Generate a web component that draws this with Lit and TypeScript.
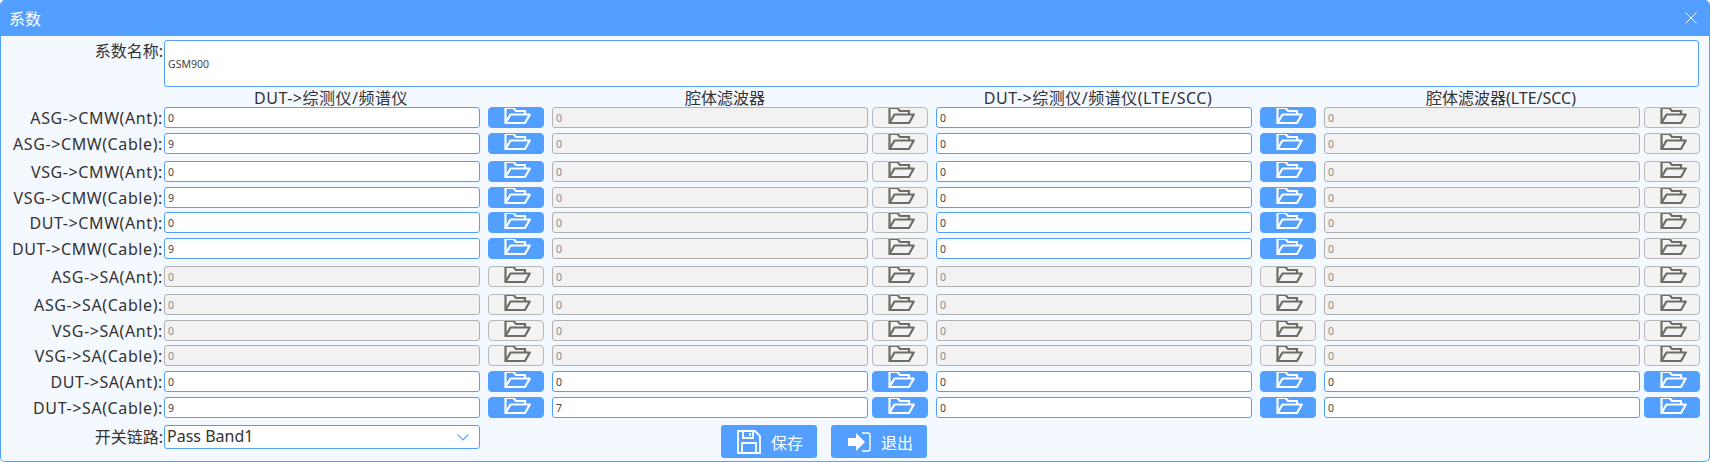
import { LitElement, html, css, svg } from "lit";
import { customElement } from "lit/decorators.js";

const rows: { label: string; cells: { value: string; enabled: boolean }[] }[] = [
  ["ASG->CMW(Ant):", "0", 1, "0", 0, "0", 1, "0", 0],
  ["ASG->CMW(Cable):", "9", 1, "0", 0, "0", 1, "0", 0],
  ["VSG->CMW(Ant):", "0", 1, "0", 0, "0", 1, "0", 0],
  ["VSG->CMW(Cable):", "9", 1, "0", 0, "0", 1, "0", 0],
  ["DUT->CMW(Ant):", "0", 1, "0", 0, "0", 1, "0", 0],
  ["DUT->CMW(Cable):", "9", 1, "0", 0, "0", 1, "0", 0],
  ["ASG->SA(Ant):", "0", 0, "0", 0, "0", 0, "0", 0],
  ["ASG->SA(Cable):", "0", 0, "0", 0, "0", 0, "0", 0],
  ["VSG->SA(Ant):", "0", 0, "0", 0, "0", 0, "0", 0],
  ["VSG->SA(Cable):", "0", 0, "0", 0, "0", 0, "0", 0],
  ["DUT->SA(Ant):", "0", 1, "0", 1, "0", 1, "0", 1],
  ["DUT->SA(Cable):", "9", 1, "7", 1, "0", 1, "0", 1],
].map((r: any[]) => ({
  label: r[0],
  cells: [0, 1, 2, 3].map((i) => ({ value: r[1 + i * 2], enabled: !!r[2 + i * 2] })),
}));

const folder = svg`<path d="M1.5 16V1h8l2.5 3h9v3.5" fill="none" stroke="currentColor" stroke-width="2.2" stroke-linejoin="miter"/><path d="M1.5 16L6.5 7.5H25.8L21 16Z" fill="none" stroke="currentColor" stroke-width="2.2" stroke-linejoin="round"/>`;

@customElement("app-root")
export class AppRoot extends LitElement {
  static styles = css`
    :host {
      display: block;
      width: 1710px;
      height: 462px;
      font-family: "Noto Sans", "Noto Sans CJK SC", sans-serif;
      color: #333;
      background: #fff;
    }
    .window {
      box-sizing: border-box;
      height: 462px;
      display: flex;
      flex-direction: column;
      border-radius: 5px;
      overflow: hidden;
      background: #f4f8ff;
      border: 1px solid #529fff;
      border-top: 0;
    }
    .title {
      height: 36px;
      flex: none;
      margin: 0 -1px;
      background: #529fff;
      color: #fff;
      display: flex;
      align-items: center;
      justify-content: space-between;
      padding: 0 13px 0 9px;
      font-size: 16px;
    }
    .close {
      display: block;
    }
    .grid {
      display: grid;
      padding-top: 4px;
      grid-template-columns: 163px 316px 64px 324px 60px 324px 64px 324px 60px;
      grid-template-rows: 47px 20px 26px 28px 26px 25px 26px 28px 28px 26px 25px 26px 26px 28px auto;
    }
    .label {
      text-align: right;
      font-size: 16px;
      line-height: 23px;
      white-space: nowrap;
      padding-right: 1px;
    }
    .sp {
      letter-spacing: 0.6px;
    }
    .name-label {
      line-height: 22px;
    }
    .select-label {
      line-height: 24px;
    }
    .head {
      font-size: 16px;
      line-height: 22px;
      text-align: center;
      white-space: nowrap;
      justify-self: end;
      width: 316px;
      box-sizing: border-box;
    }
    .h0 { padding-left: 18px; letter-spacing: 0.5px; }
    .h1 { padding-left: 30px; }
    .h2 { padding-left: 8px; letter-spacing: 0.5px; }
    .h3 { padding-left: 38px; }
    input {
      box-sizing: border-box;
      width: 316px;
      height: 21px;
      justify-self: end;
      border: 1px solid #529fff;
      border-radius: 3px;
      background: #fff;
      padding: 0 0 0 3px;
      margin: 0;
      font: 10.5px "Noto Sans", sans-serif;
      color: #444;
      outline: none;
    }
    input:disabled {
      border-color: #b0b0b0;
      background: #f2f2f2;
      color: #8a8a8a;
    }
    .name {
      grid-column: 2 / -1;
      width: 1535px;
      height: 47px;
      justify-self: start;
      padding-left: 3px;
    }
    .fbtn {
      box-sizing: border-box;
      width: 56px;
      height: 21px;
      justify-self: end;
      display: flex;
      justify-content: center;
      padding: 0 0 0 3px;
      margin: 0;
      border: 1px solid #529fff;
      border-radius: 4px;
      background: #529fff;
      color: #fff;
      overflow: hidden;
    }
    .fbtn.off {
      background: #f3f3f3;
      border-color: #b8b8b8;
      color: #6d6d65;
    }
    .fbtn svg {
      display: block;
      width: 27px;
      height: 17px;
      margin-top: -1px;
      flex: none;
    }
    .select {
      box-sizing: border-box;
      width: 316px;
      height: 24px;
      display: flex;
      align-items: center;
      justify-content: space-between;
      border: 1px solid #529fff;
      border-radius: 3px;
      background: #fff;
      padding: 0 10px 2px 2px;
      font-size: 16px;
    }
    .select svg { display: block; margin-top: 2px; }
    .actions {
      grid-column: 3 / -1;
      display: flex;
      gap: 14px;
      padding-left: 241px;
      align-items: flex-start;
    }
    .act {
      box-sizing: border-box;
      width: 96px;
      height: 33px;
      border: 0;
      border-radius: 3px;
      background: #529fff;
      color: #fff;
      display: flex;
      align-items: center;
      gap: 10px;
      padding: 0 0 0 16px;
      margin: 0;
      font: 16px "Noto Sans", "Noto Sans CJK SC", sans-serif;
    }
    .act svg { display: block; flex: none; }
  `;

  render() {
    const heads = ["DUT->综测仪/频谱仪", "腔体滤波器", "DUT->综测仪/频谱仪(LTE/SCC)", "腔体滤波器(LTE/SCC)"];
    return html`
      <div class="window">
        <div class="title">
          <span>系数</span>
          <svg class="close" width="12" height="12" viewBox="0 0 12 12">
            <path d="M.5.5l11 11M11.5.5l-11 11" stroke="#fff" stroke-width="1" fill="none" />
          </svg>
        </div>
        <div class="grid">
          <div class="label name-label">系数名称:</div>
          <input class="name" .value=${"GSM900"} />
          <div></div>
          ${heads.map((h, i) => html`<div class="head h${i}">${h}</div><div></div>`)}
          ${rows.map(
            (r) => html`
              <div class="label sp">${r.label}</div>
              ${r.cells.map(
                (c) => html`
                  <input .value=${c.value} ?disabled=${!c.enabled} />
                  <button class="fbtn ${c.enabled ? "" : "off"}">
                    <svg viewBox="0 0 27 17">${folder}</svg>
                  </button>
                `
              )}
            `
          )}
          <div class="label select-label">开关链路:</div>
          <div class="select">
            <span>Pass Band1</span>
            <svg width="12" height="7" viewBox="0 0 12 7">
              <path d="M.7.7L6 6l5.3-5.3" stroke="#529fff" stroke-width="1.2" fill="none" />
            </svg>
          </div>
          <div class="actions">
            <button class="act">
              <svg width="24" height="24" viewBox="0 0 24 24" fill="none" stroke="#fff" stroke-width="1.8">
                <path d="M1 1H18L23 6V23H1Z" />
                <path d="M6 1V8H16V1M13 3V6" />
                <path d="M5 23V13H19V23" />
              </svg>
              <span>保存</span>
            </button>
            <button class="act">
              <svg width="24" height="24" viewBox="0 0 24 24" fill="none">
                <path d="M1 8H9V3L18 12L9 21V16H1Z" fill="#fff" />
                <path d="M15 3H21Q23 3 23 5V19Q23 21 21 21H15" stroke="#fff" stroke-width="1.4" />
              </svg>
              <span>退出</span>
            </button>
          </div>
        </div>
      </div>
    `;
  }
}
